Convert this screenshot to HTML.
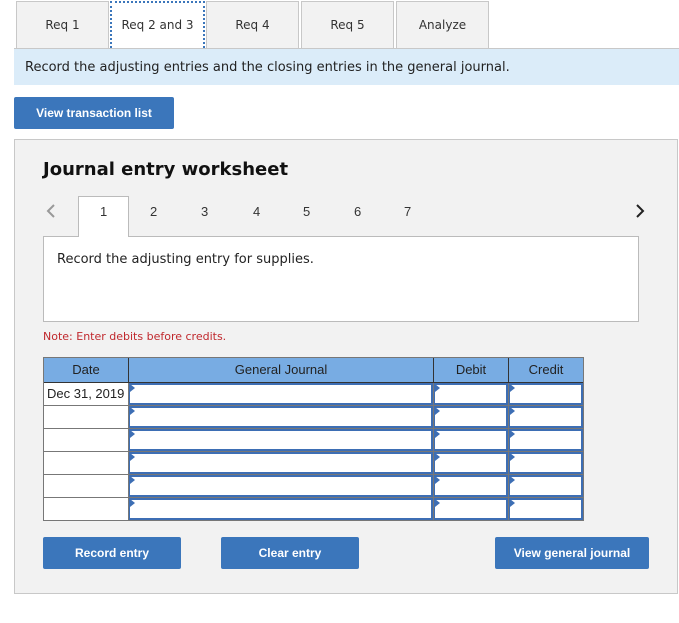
<!DOCTYPE html>
<html><head><style>
*{box-sizing:border-box;margin:0;padding:0}
body{width:679px;height:623px;background:#fff;font-family:"DejaVu Sans","Liberation Sans",sans-serif;position:relative;overflow:hidden;color:#222}
.a{position:absolute}
.tab{position:absolute;top:1px;height:47px;background:#f2f2f2;border:1px solid #c8c8c8;border-bottom:none;font-size:12px;text-align:center;line-height:46px;color:#333}
.btn{position:absolute;background:#3b76bb;color:#fff;font-family:"Liberation Sans",sans-serif;font-weight:bold;font-size:12px;text-align:center;border-radius:2px}
.num{position:absolute;top:204px;font-family:"Liberation Sans",sans-serif;font-size:13px;color:#333}
.c{position:absolute;background:#fff}
</style></head><body>
<div class="tab" style="left:16px;width:93px">Req 1</div>
<div class="tab" style="left:110px;width:95px;background:#fff;border:2px dotted #3b76bb;border-bottom:none;line-height:44px">Req 2 and 3</div>
<div class="tab" style="left:206px;width:93px">Req 4</div>
<div class="tab" style="left:301px;width:93px">Req 5</div>
<div class="tab" style="left:396px;width:93px">Analyze</div>
<div class="a" style="left:14px;top:48px;width:665px;height:1px;background:#c8c8c8"></div>
<div class="a" style="left:14px;top:49px;width:665px;height:36px;background:#dbecf9;font-size:13px;line-height:38px;padding-left:11px;color:#222">Record the adjusting entries and the closing entries in the general journal.</div>
<div class="btn" style="left:14px;top:97px;width:160px;height:32px;line-height:32px">View transaction list</div>
<div class="a" style="left:14px;top:139px;width:664px;height:455px;background:#f2f2f2;border:1px solid #c8c8c8"></div>
<div class="a" style="left:43px;top:159px;font-size:18px;font-weight:bold;color:#111">Journal entry worksheet</div>
<svg class="a" style="left:44px;top:203px" width="14" height="16"><path d="M10 2 L4 8 L10 14" stroke="#999" stroke-width="2" fill="none"/></svg>
<svg class="a" style="left:633px;top:203px" width="14" height="16"><path d="M4 2 L10 8 L4 14" stroke="#222" stroke-width="2" fill="none"/></svg>
<div class="a" style="left:78px;top:196px;width:51px;height:41px;background:#fff;border:1px solid #bbb;border-bottom:none;z-index:2"></div>
<div class="a" style="left:43px;top:236px;width:596px;height:86px;background:#fff;border:1px solid #bbb"></div>
<div class="num" style="left:100px;z-index:3">1</div>
<div class="num" style="left:150px">2</div>
<div class="num" style="left:201px">3</div>
<div class="num" style="left:253px">4</div>
<div class="num" style="left:303px">5</div>
<div class="num" style="left:354px">6</div>
<div class="num" style="left:404px">7</div>
<div class="a" style="left:57px;top:252px;font-size:13px;color:#222;z-index:3">Record the adjusting entry for supplies.</div>
<div class="a" style="left:43px;top:330px;font-size:11px;color:#c0282d">Note: Enter debits before credits.</div>

<div class="a" style="left:43px;top:357px;width:541px;height:164px;background:#777"></div>
<div class="a" style="left:44px;top:358px;width:539px;height:24px;background:#78ace3"></div>
<div class="a" style="left:128px;top:358px;width:1px;height:24px;background:#333"></div>
<div class="a" style="left:433px;top:358px;width:1px;height:24px;background:#333"></div>
<div class="a" style="left:508px;top:358px;width:1px;height:24px;background:#333"></div>
<div class="a" style="left:44px;top:382px;width:539px;height:1px;background:#333"></div>
<div class="a" style="left:44px;top:362px;width:84px;text-align:center;font-family:'Liberation Sans',sans-serif;font-size:13px;color:#222">Date</div>
<div class="a" style="left:129px;top:362px;width:304px;text-align:center;font-family:'Liberation Sans',sans-serif;font-size:13px;color:#222">General Journal</div>
<div class="a" style="left:434px;top:362px;width:74px;text-align:center;font-family:'Liberation Sans',sans-serif;font-size:13px;color:#222">Debit</div>
<div class="a" style="left:509px;top:362px;width:74px;text-align:center;font-family:'Liberation Sans',sans-serif;font-size:13px;color:#222">Credit</div>
<div id="rows"></div>
<script>
var h='';
for(var i=0;i<6;i++){var y=383+i*23;
h+='<div class="c" style="left:44px;top:'+y+'px;width:84px;height:22px"></div>';
h+='<div class="c" style="left:129px;top:'+y+'px;width:304px;height:22px;border:2px solid #3d6eb4;border-left-width:1px"></div>';
h+='<div class="c" style="left:434px;top:'+y+'px;width:74px;height:22px;border:2px solid #3d6eb4;border-left-width:1px"></div>';
h+='<div class="c" style="left:509px;top:'+y+'px;width:74px;height:22px;border:2px solid #3d6eb4;border-left-width:1px"></div>';
[130,435,510].forEach(function(x){h+='<div class="a" style="left:'+x+'px;top:'+(y+1)+'px;width:0;height:0;border-top:4px solid transparent;border-bottom:4px solid transparent;border-left:5px solid #3d6eb4"></div>';});
}
document.getElementById('rows').innerHTML=h;
</script>
<div class="a" style="left:47px;top:386px;font-family:'Liberation Sans',sans-serif;font-size:13px;color:#222">Dec 31, 2019</div>
<div class="btn" style="left:43px;top:537px;width:138px;height:32px;line-height:32px">Record entry</div>
<div class="btn" style="left:221px;top:537px;width:138px;height:32px;line-height:32px">Clear entry</div>
<div class="btn" style="left:495px;top:537px;width:154px;height:32px;line-height:32px">View general journal</div>
</body></html>
